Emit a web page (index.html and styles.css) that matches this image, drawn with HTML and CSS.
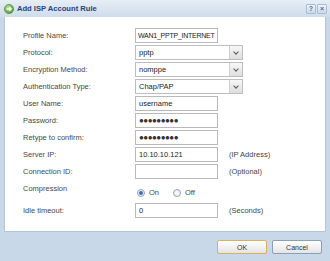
FILE: index.html
```html
<!DOCTYPE html>
<html lang="en">

<head>
    <meta charset="UTF-8">
    <meta name="viewport" content="width=device-width, initial-scale=1.0">
    <title>Add ISP Account Rule</title>

    <link rel="stylesheet" href="styles.css">
</head>

<body>
    <div class="dialog">
        <!-- title bar -->
        <div class="titlebar">
            <svg class="title-icon" width="10" height="10" viewBox="0 0 10 10">
                <defs>
                    <radialGradient id="g" cx="40%" cy="35%" r="70%">
                        <stop offset="0" stop-color="#b8e39a" />
                        <stop offset="1" stop-color="#4f9a2c" />
                    </radialGradient>
                </defs>
                <circle cx="5" cy="5" r="4.6" fill="url(#g)" stroke="#3f7f22" stroke-width="0.6" />
                <path d="M2.6 5 H7.2 M5.3 3.1 L7.2 5 L5.3 6.9" fill="none" stroke="#fff" stroke-width="1.3" />
            </svg>
            <span class="title">Add ISP Account Rule</span>
            <div class="tools">
                <span class="tool">?</span>
                <span class="tool">&times;</span>
            </div>
        </div>

        <!-- form -->
        <div class="panel">
            <div class="row">
                <label>Profile Name:</label>
                <div class="field tight">WAN1_PPTP_INTERNET</div>
            </div>
            <div class="row">
                <label>Protocol:</label>
                <div class="select"><span>pptp</span><i class="arrow"></i></div>
            </div>
            <div class="row">
                <label>Encryption Method:</label>
                <div class="select"><span>nomppe</span><i class="arrow"></i></div>
            </div>
            <div class="row">
                <label>Authentication Type:</label>
                <div class="select"><span>Chap/PAP</span><i class="arrow"></i></div>
            </div>
            <div class="row">
                <label>User Name:</label>
                <div class="field">username</div>
            </div>
            <div class="row">
                <label>Password:</label>
                <div class="field pass">●●●●●●●●●</div>
            </div>
            <div class="row">
                <label>Retype to confirm:</label>
                <div class="field pass">●●●●●●●●●</div>
            </div>
            <div class="row">
                <label>Server IP:</label>
                <div class="field">10.10.10.121</div>
                <span class="note">(IP Address)</span>
            </div>
            <div class="row">
                <label>Connection ID:</label>
                <div class="field"></div>
                <span class="note">(Optional)</span>
            </div>
            <div class="row row-radio">
                <label>Compression</label>
                <div class="radios">
                    <span class="radio checked"></span><span class="radio-text">On</span>
                    <span class="radio"></span><span class="radio-text">Off</span>
                </div>
            </div>
            <div class="row">
                <label>Idle timeout:</label>
                <div class="field">0</div>
                <span class="note">(Seconds)</span>
            </div>
        </div>

        <!-- buttons -->
        <div class="footer">
            <button class="btn btn-ok">OK</button>
            <button class="btn">Cancel</button>
        </div>
    </div>
</body>

</html>
```

FILE: styles.css
```css
body {
    margin: 0;
    font-family: 'Liberation Sans', Arial, sans-serif;
    font-size: 7.5px;
    color: #474747;
    background-color: #c9d8e9;
}

.dialog {
    width: 330px;
    height: 261px;
    background-color: #c9d8e9;
    display: flex;
    flex-direction: column;
}

/* title bar */
.titlebar {
    height: 17px;
    display: flex;
    align-items: center;
    padding: 0 3px 0 4px;
    box-sizing: border-box;
    background: linear-gradient(#e6eef6, #cfdcea);
}

.title-icon {
    margin-right: 3px;
}

.title {
    font-size: 7.6px;
    font-weight: bold;
    color: #24457a;
}

.tools {
    margin-left: auto;
    display: flex;
    gap: 1px;
}

.tool {
    width: 10px;
    height: 10px;
    display: flex;
    align-items: center;
    justify-content: center;
    font-size: 7px;
    font-weight: bold;
    color: #4b6b99;
    background: linear-gradient(#f1f5fa, #cad8e8);
    border: 1px solid #a9bed6;
    box-sizing: border-box;
    border-radius: 1px;
}

/* form panel */
.panel {
    height: 215px;
    margin: 0 4px;
    padding: 10px 0 0 18px;
    box-sizing: border-box;
    background-color: #ffffff;
    border: 1px solid #b3c6dc;
    border-top: none;
}

.row {
    height: 17px;
    display: flex;
    align-items: center;
}

.row label {
    width: 112px;
    flex-shrink: 0;
}

.field {
    width: 83px;
    height: 15px;
    padding: 0 3px;
    box-sizing: border-box;
    border: 1px solid #b9b9b9;
    display: flex;
    align-items: center;
    white-space: nowrap;
    overflow: hidden;
    color: #222;
}

.field.tight {
    padding: 0 2px;
    font-size: 7px;
    letter-spacing: -0.25px;
}

.field.pass {
    font-size: 8px;
    letter-spacing: -0.5px;
    color: #333;
}

.note {
    margin-left: 11px;
    color: #444;
}

.select {
    width: 108px;
    height: 15px;
    display: flex;
    align-items: center;
    border: 1px solid #bdbdbd;
    box-sizing: border-box;
    padding-left: 3px;
    color: #222;
}

.select span {
    flex: 1;
}

.arrow {
    width: 13px;
    height: 13px;
    display: flex;
    align-items: center;
    justify-content: center;
    background: linear-gradient(#f7f7f7, #dedede);
    border-left: 1px solid #cfcfcf;
    box-sizing: border-box;
}

.arrow::after {
    content: '';
    width: 3px;
    height: 3px;
    border-right: 1.2px solid #4a5a70;
    border-bottom: 1.2px solid #4a5a70;
    transform: translateY(-1px) rotate(45deg);
}

/* compression radios */
.row-radio {
    height: 22px;
    align-items: flex-start;
}

.row-radio label {
    margin-top: 4px;
}

.radios {
    display: flex;
    align-items: center;
    margin-top: 8px;
    padding-left: 2px;
}

.radio {
    width: 8px;
    height: 8px;
    border-radius: 50%;
    border: 1px solid #9aa5b3;
    box-sizing: border-box;
    background: radial-gradient(#ffffff, #dfe4ea);
    display: flex;
    align-items: center;
    justify-content: center;
}

.radio.checked::after {
    content: '';
    width: 4px;
    height: 4px;
    border-radius: 50%;
    background: #3f6fb0;
}

.radio-text {
    margin: 0 14px 0 4px;
}

/* footer */
.footer {
    flex: 1;
    display: flex;
    justify-content: flex-end;
    align-items: flex-start;
    gap: 5px;
    padding: 8px 8px 0 0;
}

.btn {
    width: 50px;
    height: 14px;
    padding: 0;
    font-family: 'Liberation Sans', Arial, sans-serif;
    font-size: 7px;
    color: #333;
    background: linear-gradient(#ffffff, #e4e4e4);
    border: 1px solid #8a9fb8;
    border-radius: 2px;
}

.btn-ok {
    border-color: #d8b25a;
}
```
